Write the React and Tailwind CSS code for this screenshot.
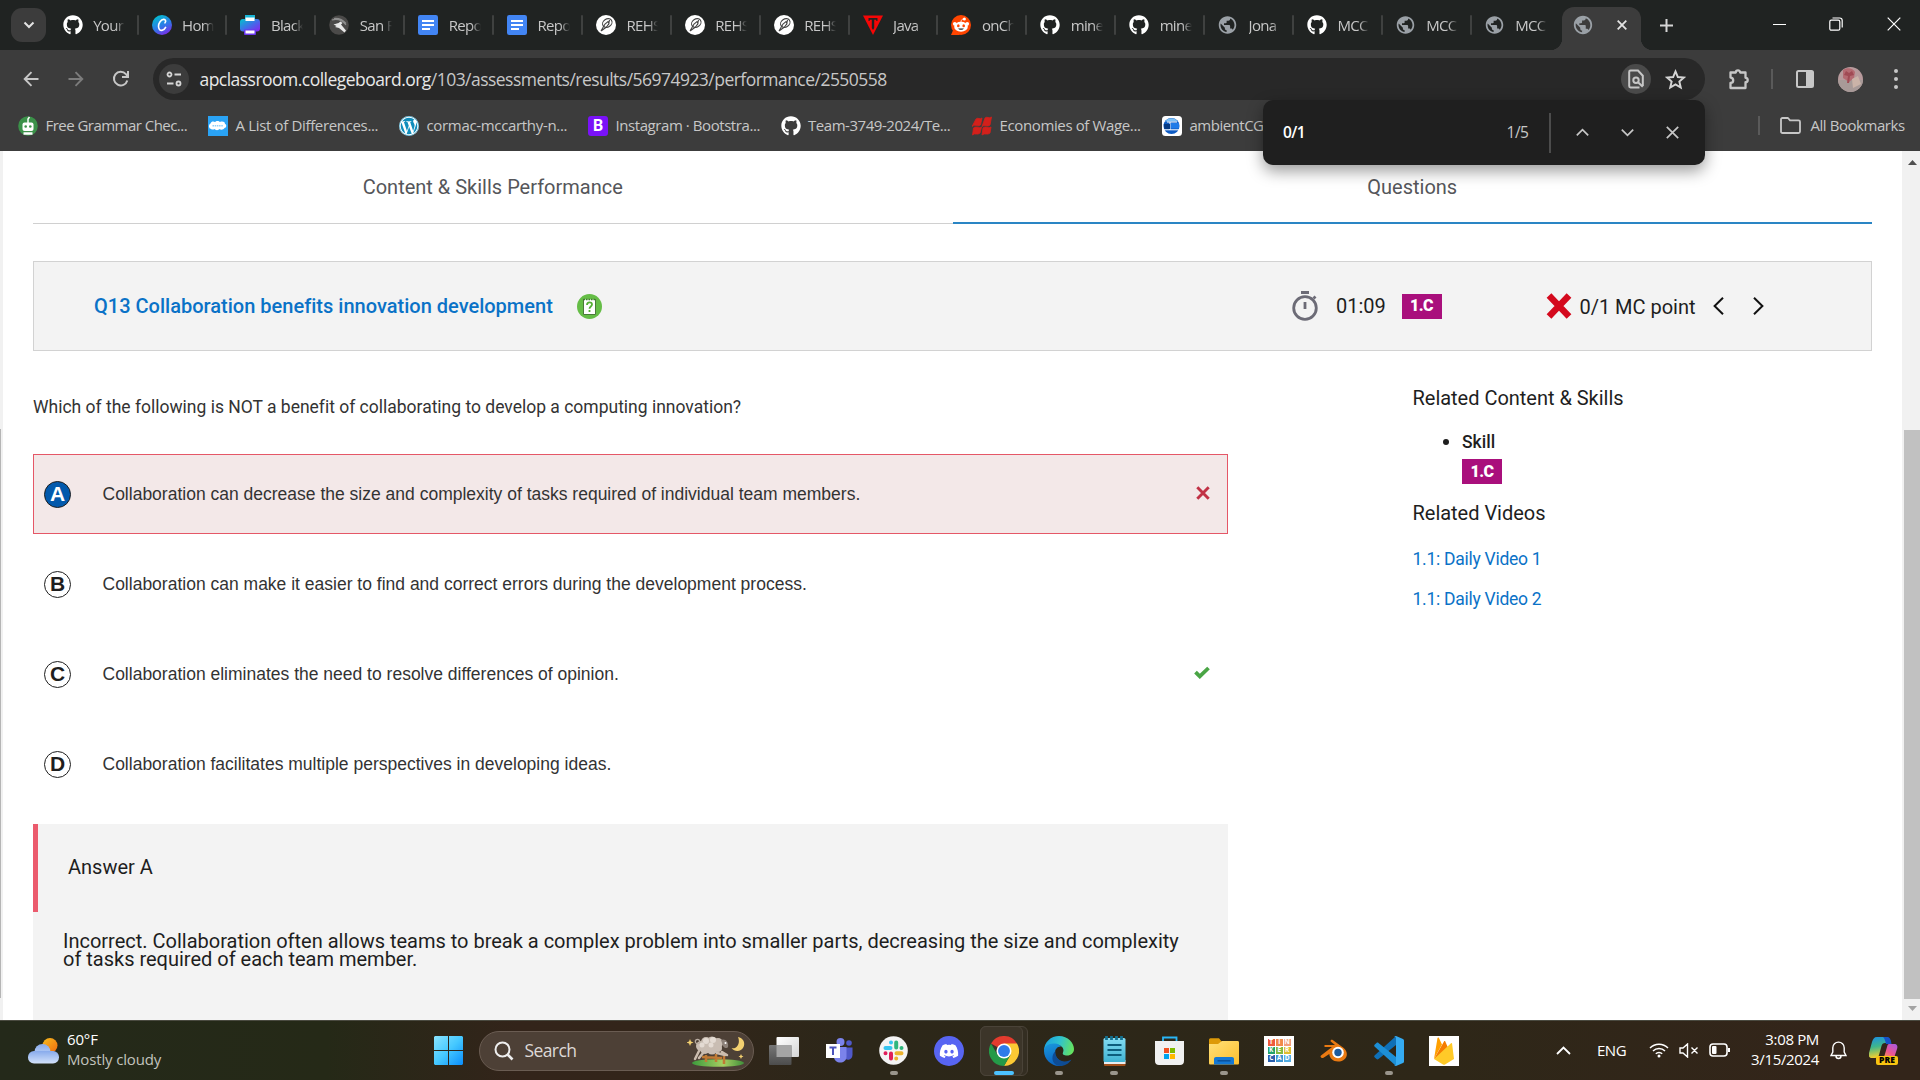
import React from "react";
import { FaGithub, FaDiscord, FaWordpress } from "react-icons/fa";
import { MdPublic } from "react-icons/md";

/* ---------- favicons ---------- */
const Github = () => <FaGithub className="size-5 text-white" />;
const Globe = () => <MdPublic className="-ml-px size-[22px] text-[#9aa0a6]" />;

const Canva = () => (
  <svg className="size-5" viewBox="0 0 20 20">
    <defs>
      <linearGradient id="canva" x1="0.2" y1="0" x2="0.7" y2="1">
        <stop offset="0" stopColor="#00c4cc" />
        <stop offset="0.55" stopColor="#2b7be8" />
        <stop offset="1" stopColor="#7d2ae8" />
      </linearGradient>
    </defs>
    <circle cx="10" cy="10" r="10" fill="url(#canva)" />
    <path d="M13 7.800c1.300-1.500.6-3.600-1.400-3.400-2.700.3-5.100 3.700-5.100 6.900 0 2.700 1.400 4.300 3.400 4.100 1.600-.2 3-1.500 3.700-3" fill="none" stroke="#fff" strokeWidth="1.600" strokeLinecap="round" />
  </svg>
);

const Printer = () => (
  <svg className="size-5" viewBox="0 0 20 20">
    <defs>
      <linearGradient id="prn" x1="0" y1="0" x2="1" y2="1">
        <stop offset="0" stopColor="#00c4cc" />
        <stop offset="0.5" stopColor="#3f6fe8" />
        <stop offset="1" stopColor="#8b1ff0" />
      </linearGradient>
    </defs>
    <rect x="5" y="0" width="10" height="6" fill="#19b5d6" />
    <rect x="0" y="4" width="20" height="12.500" rx="3" fill="url(#prn)" />
    <rect x="5.500" y="2.500" width="9" height="3.500" fill="#fff" />
    <rect x="4" y="14.500" width="12" height="5.500" rx="1" fill="#6a35ee" />
    <rect x="5.500" y="15.500" width="9" height="3" fill="#fff" />
  </svg>
);

const SanIcon = () => (
  <svg className="size-5" viewBox="0 0 20 20">
    <circle cx="10" cy="10" r="9.800" fill="#4b4a49" />
    <path d="M3 5c5-1.500 10 0 14 5M5 3.500c5-.5 9 1.500 12 5" stroke="#8f8f8f" strokeWidth="1.200" fill="none" />
    <path d="M4.500 9.500l5-1.500 2-1.500 2 1.500-1.500 1.500 5 6-1.500 2-5.500-4.500-4-1 1.500-1z" fill="#e8e8e8" />
  </svg>
);

const Docs = () => (
  <svg className="size-5" viewBox="0 0 20 20">
    <rect width="20" height="20" rx="2.200" fill="#4285f4" />
    <path d="M4 6h12M4 10h12M4 14h8" stroke="#fff" strokeWidth="1.800" />
  </svg>
);

const Rehs = () => (
  <svg className="size-5" viewBox="0 0 20 20">
    <circle cx="10" cy="10" r="10" fill="#fff" />
    <g fill="none" stroke="#444" strokeWidth="1.100">
      <ellipse cx="11.300" cy="8" rx="5" ry="4" transform="rotate(-35 11.300 8)" />
      <path d="M5 16l4-7 3-2.500 1 2-2.500 3.500L5 16M13.500 5l-1 5" />
    </g>
  </svg>
);

const RedT = () => (
  <svg className="size-5" viewBox="0 0 20 20">
    <path d="M0 .5h20L10 20z" fill="#f60606" />
    <path d="M5.500 3h9v3h-1l-.5-1.300h-1.800V13l-1.200 2-1.200-2V4.700H7L6.500 6h-1z" fill="#222" />
  </svg>
);

const Reddit = () => (
  <svg className="size-5" viewBox="0 0 20 20">
    <circle cx="10" cy="10" r="10" fill="#ff4500" />
    <path d="M0 20l3-7 6 7z" fill="#ff4500" />
    <circle cx="3.800" cy="8.800" r="1.900" fill="#fff" />
    <circle cx="16.200" cy="8.800" r="1.900" fill="#fff" />
    <circle cx="13.400" cy="3.900" r="1.500" fill="#fff" />
    <path d="M10 7c.1-2 .9-3 3-3" stroke="#fff" strokeWidth=".8" fill="none" />
    <ellipse cx="10" cy="11.700" rx="6.800" ry="5" fill="#fff" />
    <ellipse cx="7.300" cy="10.800" rx="1.300" ry="1.500" fill="#ff4500" />
    <ellipse cx="12.700" cy="10.800" rx="1.300" ry="1.500" fill="#ff4500" />
    <path d="M7.200 13.500h5.600c-.5 1.800-5.100 1.800-5.600 0z" fill="#222" />
  </svg>
);

const tabs = [
  [Github, "Your"],
  [Canva, "Hom"],
  [Printer, "Black"],
  [SanIcon, "San F"],
  [Docs, "Repo"],
  [Docs, "Repo"],
  [Rehs, "REHS"],
  [Rehs, "REHS"],
  [Rehs, "REHS"],
  [RedT, "Java"],
  [Reddit, "onCh"],
  [Github, "mine"],
  [Github, "mine"],
  [Globe, "Jona"],
  [Github, "MCC"],
  [Globe, "MCC"],
  [Globe, "MCC"],
];

function TabStrip() {
  return (
    <div className="flex h-[50px] bg-[#202322]">
      <div className="mt-2 ml-[11px] flex h-[34px] w-[35px] items-center justify-center rounded-[11px] bg-[#3c3c3c]">
        <svg className="size-3" viewBox="0 0 12 12" fill="none" stroke="#e3e3e3" strokeWidth="2">
          <path d="M1.500 3.500L6 8l4.500-4.500" />
        </svg>
      </div>
      <div className="ml-[4.700px] flex w-[1511px]">
        {tabs.map(([Icon, label], i) => (
          <div key={i} className="flex min-w-0 flex-1 items-center pl-3">
            <div className="flex w-5 shrink-0 justify-center"><Icon /></div>
            <div className="ml-[10.500px] w-[32px] overflow-hidden text-[15px] tracking-[-0.700px] whitespace-nowrap text-[#c7c7c7] [mask-image:linear-gradient(to_right,#000_70%,transparent)]">
              {label}
            </div>
            <div className={"mr-px ml-auto h-5 w-0.5 rounded-full " + (i === 16 ? "bg-transparent" : "bg-[#3f4140]")} />
          </div>
        ))}
      </div>
      <div className="relative mt-[7px] flex w-[79px] items-center rounded-t-xl bg-[#3c3c3c] pb-[7px] pl-[11px]">
        <div className="absolute bottom-0 -left-3 size-3 bg-[radial-gradient(circle_at_0_0,transparent_12px,#3c3c3c_12.500px)]" />
        <div className="absolute -right-3 bottom-0 size-3 bg-[radial-gradient(circle_at_100%_0,transparent_12px,#3c3c3c_12.500px)]" />
        <Globe />
        <svg className="ml-[23px] size-2.5" viewBox="0 0 10 10" stroke="#e3e3e3" strokeWidth="1.800">
          <path d="M.7.7l8.600 8.600M9.300.7L.7 9.300" />
        </svg>
      </div>
      <svg className="mt-[18.500px] ml-[19px] size-[13px]" viewBox="0 0 13 13" stroke="#d5d5d5" strokeWidth="2">
        <path d="M6.500 0v13M0 6.500h13" />
      </svg>
      <div className="ml-auto flex items-center pr-[19px] pb-0.5">
        <div className="mr-[43px] h-px w-[13px] bg-white" />
        <svg className="mr-[44px] size-[14px]" viewBox="0 0 14 14" fill="none" stroke="#fff" strokeWidth="1.200">
          <rect x=".8" y="3.200" width="10" height="10" rx="1.500" />
          <path d="M3.500 1h7.200c1.400 0 2.500 1.100 2.500 2.500v7" />
        </svg>
        <svg className="size-[14px]" viewBox="0 0 14 14" stroke="#fff" strokeWidth="1.200">
          <path d="M.7.7l12.600 12.600M13.300.7L.7 13.300" />
        </svg>
      </div>
    </div>
  );
}

function Toolbar() {
  return (
    <div className="flex h-[50px] items-center bg-[#3c3c3c] pt-2">
      <svg className="ml-[22.500px] size-4" viewBox="0 0 16 16" fill="none" stroke="#c7c7c7" strokeWidth="1.900">
        <path d="M15.500 8H2M8.500 1.200L1.700 8l6.800 6.800" />
      </svg>
      <svg className="ml-[29px] size-4" viewBox="0 0 16 16" fill="none" stroke="#7c7c7c" strokeWidth="1.900">
        <path d="M.5 8H14M7.500 1.200L14.300 8l-6.800 6.800" />
      </svg>
      <svg className="ml-[28px] size-[18px]" viewBox="0 0 18 18" fill="none" stroke="#c7c7c7" strokeWidth="2">
        <path d="M15.300 10.500A6.800 6.800 0 1 1 13.900 4.200l1.600 1.800" />
        <path d="M16 1v6h-6" />
      </svg>
      <div className="ml-[23.500px] flex h-[42px] w-[1552px] items-center rounded-full bg-[#282828]">
        <div className="ml-1.5 flex size-[30px] items-center justify-center rounded-full bg-[#3c3c3c]">
          <svg className="size-4" viewBox="0 0 16 16" fill="none" stroke="#d5d5d5" strokeWidth="1.800">
            <circle cx="3.500" cy="3.500" r="2" />
            <path d="M8.500 3.500H15M1 12.500h6.500" />
            <circle cx="12.500" cy="12.500" r="2" />
          </svg>
        </div>
        <div className="ml-[10.500px] text-[17.500px] tracking-[-0.530px] whitespace-nowrap text-[#c7c7c7]">
          <span className="text-[#e8e8e8]">apclassroom.collegeboard.org</span>/103/assessments/results/56974923/performance/2550558
        </div>
        <div className="ml-auto flex size-[30px] items-center justify-center rounded-full bg-[#4a4a4a]">
          <svg className="h-[20px] w-4" viewBox="0 0 16 19" fill="none" stroke="#c7c7c7" strokeWidth="2">
            <path d="M14.800 16.500V6.200L10 1.100H2.500c-.8 0-1.300.5-1.300 1.300v14.200c0 .8.500 1.300 1.300 1.300h9" />
            <circle cx="8" cy="10.700" r="2.700" />
            <path d="M10 12.700l4.800 4.600" />
          </svg>
        </div>
        <svg className="mr-[19px] ml-[14px] size-[21px]" viewBox="0 0 24 24" fill="none" stroke="#d5d5d5" strokeWidth="2.200">
          <path d="M12 2.800l2.700 6.400 6.900.6-5.200 4.500 1.600 6.800-6-3.600-6 3.600 1.600-6.800-5.200-4.500 6.900-.6z" />
        </svg>
      </div>
      <svg className="ml-[23px] size-[22px]" viewBox="0 0 22 22" fill="none" stroke="#c7c7c7" strokeWidth="2.300" strokeLinejoin="round">
        <path d="M2.500 4.500h5.300a2.200 2.200 0 0 1 4.400 0h5.300v5.300a2.200 2.200 0 0 1 0 4.400V20h-15v-5a2.700 2.700 0 0 0 0-5.400z" />
      </svg>
      <div className="ml-[21px] h-5 w-0.5 bg-[#5a5a5a]" />
      <svg className="ml-[23px] size-[18px]" viewBox="0 0 18 18">
        <rect x="1" y="1" width="16" height="16" rx="1.500" fill="none" stroke="#c7c7c7" strokeWidth="2" />
        <path d="M10 1h7v16h-7z" fill="#c7c7c7" />
      </svg>
      <svg className="ml-6 size-[25px] rounded-full" viewBox="0 0 25 25">
        <rect width="25" height="25" fill="#b89a9c" />
        <path d="M0 13h25v12H0z" fill="#a89a98" />
        <path d="M5 3c4-3 10-2 12 2l-1 6-5 4-6-4z" fill="#b56a72" />
        <path d="M8 4l3 2 3-2 2 4-4 1-1 7H9l1-7-4-1z" fill="#a04a54" />
        <path d="M14 12l6-3 3 8-8 4z" fill="#cbb3a8" />
      </svg>
      <div className="ml-[31px] flex flex-col gap-[4.500px]">
        <div className="size-[3.500px] rounded-full bg-[#c7c7c7]" />
        <div className="size-[3.500px] rounded-full bg-[#c7c7c7]" />
        <div className="size-[3.500px] rounded-full bg-[#c7c7c7]" />
      </div>
    </div>
  );
}

const bookmarks = [
  ["Free Grammar Chec...", "w-[190px]", "tracking-[-0.530px]", (
    <svg className="size-5" viewBox="0 0 20 20"><circle cx="10" cy="10" r="9.800" fill="#3b9149" /><path d="M10 7V3l1.500-2" stroke="#fff" strokeWidth="1.500" fill="none" /><rect x="4.500" y="6.500" width="11" height="8.500" rx="2" fill="#fff" /><circle cx="7.700" cy="10.500" r="1.300" fill="#3b9149" /><circle cx="12.300" cy="10.500" r="1.300" fill="#3b9149" /><path d="M5.500 17.500h9" stroke="#fff" strokeWidth="2.500" /></svg>
  )],
  ["A List of Differences...", "w-[191px]", "tracking-[-0.340px]", (
    <svg className="size-5" viewBox="0 0 20 20"><rect width="20" height="20" fill="#2aa3f5" /><path d="M3 13a3 3 0 0 1-.5-5.500C3 5 6 5 7 6c1-1.500 4-1.500 5 0 2-1 5-.5 5 2 2 .5 1.500 4-.5 4-1 2-4 2-5 1-1 1.500-4 1.500-5 0-1 .8-2.500.8-3.500 0z" fill="#fff" /><path d="M4.500 9.800h11" stroke="#8fcff9" strokeWidth="1.500" strokeDasharray="1.500 .7" /></svg>
  )],
  ["cormac-mccarthy-n...", "w-[189px]", "tracking-[-0.330px]", (
    <div className="flex size-5 items-center justify-center rounded-full bg-white"><FaWordpress className="size-5 text-[#0f8dbc]" /></div>
  )],
  ["Instagram · Bootstra...", "w-[192.500px]", "tracking-[-0.430px]", (
    <div className="flex size-5 items-center justify-center rounded-[3px] bg-[#7a12f8] font-[Roboto] text-[16px] font-bold text-white">B</div>
  )],
  ["Team-3749-2024/Te...", "w-[191.500px]", "tracking-[-0.450px]", <Github key="g" />],
  ["Economies of Wage...", "w-[190px]", "tracking-[-0.370px]", (
    <svg className="size-5" viewBox="0 0 20 20"><path d="M4 3c2-2 4 1 6-1L8.500 9c-3 2.500-5-1.500-8.500 1.500zM13 2c2-2 4 1 6.500-1L18 9c-3 2.500-5-1-8 1.500zM1.500 12c3-2.500 5 1 8-1L8 17c-2.500 2.500-5-.5-7.500 2zM11 12c3-2.500 5 1 8-1l-1 6c-2.500 2.500-5-.5-8 2z" fill="#d3201b" stroke="#d3201b" strokeWidth=".8" /></svg>
  )],
  ["ambientCG", "w-[110px]", "tracking-[-0.500px]", (
    <svg className="size-5" viewBox="0 0 20 20"><rect width="20" height="20" rx="3.500" fill="#fff" /><circle cx="9.500" cy="10" r="8" fill="#0d5bc4" /><path d="M3 5.500C6 1 13 1 16 5.500z" fill="#7cc0f5" /><path d="M5 6h10M8 6v8M2 13.800h15" stroke="#fff" strokeWidth="1" /><path d="M1.700 8h6.300v5H2.500z" fill="#063a83" /><path d="M9 7h8v5.500H9z" fill="#1f7be8" /></svg>
  )],
];

function BookmarksBar() {
  return (
    <div className="flex h-[51px] items-center bg-[#3c3c3c] pl-[18px] text-[15px] text-[#c7c7c7]">
      {bookmarks.map(([label, w, tr, icon]) => (
        <div key={label} className={"flex shrink-0 items-center " + w}>
          {icon}
          <span className={"ml-[7.500px] whitespace-nowrap " + tr}>{label}</span>
        </div>
      ))}
      <div className="ml-auto h-[19px] w-0.5 bg-[#5a5a5a]" />
      <svg className="ml-5 h-[17px] w-[21px]" viewBox="0 0 21 17" fill="none" stroke="#c7c7c7" strokeWidth="1.800" strokeLinejoin="round">
        <path d="M1 2.500C1 1.600 1.600 1 2.500 1H8l2 2.300h8.500c.9 0 1.500.6 1.500 1.500v9.700c0 .9-.6 1.500-1.500 1.500h-16C1.600 16 1 15.400 1 14.500z" />
      </svg>
      <span className="mr-[14.500px] ml-[9.500px] w-[95px] tracking-[-0.450px] whitespace-nowrap">All Bookmarks</span>
    </div>
  );
}

function FindBar() {
  return (
    <div className="absolute top-[100px] left-[1263px] z-20 flex h-[65px] w-[442px] items-center rounded-[10px] bg-[#1f1f1f] pl-5 text-[15.500px] shadow-[0_6px_16px_rgba(0,0,0,0.4)]">
      <span className="font-semibold tracking-[-0.600px] text-white">0/1</span>
      <span className="mr-5 ml-auto tracking-[-0.500px] text-[#c7c7c7]">1/5</span>
      <div className="h-10 w-0.5 bg-[#4c4c4c]" />
      <svg className="ml-[25px] size-[13px]" viewBox="0 0 13 13" fill="none" stroke="#c7c7c7" strokeWidth="1.700"><path d="M.8 9.300l5.700-5.700 5.700 5.700" /></svg>
      <svg className="ml-8 size-[13px]" viewBox="0 0 13 13" fill="none" stroke="#c7c7c7" strokeWidth="1.700"><path d="M.8 3.700l5.700 5.700 5.700-5.700" /></svg>
      <svg className="mr-[26.500px] ml-8 size-[13px]" viewBox="0 0 13 13" fill="none" stroke="#c7c7c7" strokeWidth="1.700"><path d="M.8.8l11.400 11.400M12.200.8L.8 12.200" /></svg>
    </div>
  );
}

/* ---------- page ---------- */
const Badge = () => (
  <div className="flex h-[25px] w-10 items-center justify-center bg-[#a90f7c] text-[16px] font-black tracking-[-0.500px] text-white">1.C</div>
);

const choices = [
  ["A", "Collaboration can decrease the size and complexity of tasks required of individual team members."],
  ["B", "Collaboration can make it easier to find and correct errors during the development process."],
  ["C", "Collaboration eliminates the need to resolve differences of opinion."],
  ["D", "Collaboration facilitates multiple perspectives in developing ideas."],
];

function Choice({ letter, text }) {
  const wrong = letter === "A";
  return (
    <div className={"mb-2.5 flex h-20 items-center border pl-2.5 font-['Liberation_Sans',sans-serif] " + (wrong ? "border-[#e55767] bg-[#f3e8e8]" : "border-transparent")}>
      <div className={"flex size-[27px] shrink-0 items-center justify-center rounded-full border-[1.500px] border-[#1e1e1e] text-[21px] font-bold " + (wrong ? "bg-[#0259ac] text-white" : "bg-white text-[#1e1e1e]")}>
        {letter}
      </div>
      <span className="ml-[31.500px] text-[17.500px] whitespace-nowrap text-[#333]">{text}</span>
      {wrong && (
        <svg className="mr-[17.500px] mb-0.5 ml-auto size-[14px]" viewBox="0 0 13 13" stroke="#c13145" strokeWidth="2.700"><path d="M1.200 1.200l10.600 10.600M11.800 1.200L1.200 11.800" /></svg>
      )}
      {letter === "C" && (
        <svg className="mr-[17px] mb-[3px] ml-auto h-[13px] w-4" viewBox="0 0 16 13" fill="none" stroke="#4aa545" strokeWidth="3.800"><path d="M1.500 6.200l4.300 4.200L14.500 2" /></svg>
      )}
    </div>
  );
}

function Page() {
  return (
    <div className="flex h-[869px] bg-white font-[Roboto,sans-serif] text-[#1e1e1e]">
      <div className="w-[3px] bg-[#f1f1f1] pt-[278px]">
        <div className="h-[569px] w-px bg-[#b5b5b5]" />
      </div>
      <div className="ml-[30px] flex w-[1839px] flex-col">
        <div className="flex h-[73px] text-[20px] text-[#55565a]">
          <div className="flex flex-1 justify-center border-b border-[#d0d0d0] pt-[21px]">Content &amp; Skills Performance</div>
          <div className="flex flex-1 justify-center border-b-2 border-[#2a85c4] pt-[21px]">Questions</div>
        </div>
        <div className="mt-[37px] flex h-[90px] shrink-0 items-center border border-[#d2d2d2] bg-[#f3f3f3] text-[20px]">
          <div className="ml-[60px] w-[458px] font-medium tracking-[0.010px] whitespace-nowrap text-[#0a72c7]">Q13 Collaboration benefits innovation development</div>
          <div className="ml-[25px] flex size-[25px] items-center justify-center rounded-full bg-[#65bd46]">
            <svg className="h-[17px] w-[13px]" viewBox="0 0 13 17">
              <rect x=".5" y="1.500" width="12" height="15" fill="#fff" />
              <path d="M.5 1v15.500h12V1" fill="none" stroke="#4a7a3a" strokeWidth="1" />
              <path d="M.5 1.500h12" stroke="#3f7a2e" strokeWidth="1.500" strokeDasharray="1.500 1" />
              <path d="M4 7c0-3.500 5-3.500 5-.5 0 2-2.500 2-2.500 4.200M6.500 12v2" fill="none" stroke="#55b034" strokeWidth="1.800" />
            </svg>
          </div>
          <svg className="ml-[690px] h-[30px] w-[26px]" viewBox="0 0 26 30" fill="none" stroke="#6c6b76" strokeWidth="2.800">
            <circle cx="13" cy="17" r="11.300" />
            <path d="M9 1.500h8M13 11v7M21.500 7.500l2-2" />
          </svg>
          <div className="ml-[18px] w-[51px]">01:09</div>
          <div className="ml-[14.500px]"><Badge /></div>
          <svg className="ml-[104px] size-[26px]" viewBox="0 0 26 26" stroke="#d4091d" strokeWidth="6.500"><path d="M3 2.500l20 21M23 2.500l-20 21" /></svg>
          <div className="ml-2 w-[117px] pt-0.5 tracking-[-0.020px] whitespace-nowrap">0/1 MC point</div>
          <svg className="ml-[16px] h-[18px] w-[11px]" viewBox="0 0 11 18" fill="none" stroke="#111" strokeWidth="2"><path d="M10 .8L1.600 9l8.400 8.200" /></svg>
          <svg className="ml-[29px] h-[18px] w-[11px]" viewBox="0 0 11 18" fill="none" stroke="#111" strokeWidth="2"><path d="M1 .8L9.400 9 1 17.200" /></svg>
        </div>
        <div className="flex flex-1">
          <div className="flex w-[1195px] flex-col">
            <div className="h-[103px] pt-[43px] text-[17.500px] tracking-[-0.005px] whitespace-nowrap text-[#333]">
              Which of the following is NOT a benefit of collaborating to develop a computing innovation?
            </div>
            {choices.map(([l, t]) => <Choice key={l} letter={l} text={t} />)}
            <div className="mt-2.5 flex-1 bg-[#f3f3f3]">
              <div className="flex h-[88px] items-center border-l-[5px] border-[#eb5b6d] pb-0.5 pl-[30px] text-[20px]">Answer A</div>
              <div className="mt-5 ml-[30px] text-[20px] leading-[18px] tracking-[-0.006px] whitespace-nowrap">
                Incorrect. Collaboration often allows teams to break a complex problem into smaller parts, decreasing the size and complexity<br />of tasks required of each team member.
              </div>
            </div>
          </div>
          <div className="ml-[184.500px] pt-[32px] text-[20px]">
            <div className="h-[47px] leading-[30px] tracking-[-0.020px]">Related Content &amp; Skills</div>
            <div className="flex items-start">
              <div className="mt-[9px] ml-[30px] size-1.5 rounded-full bg-[#1e1e1e]" />
              <div className="ml-[13.500px]">
                <div className="h-[29px] pt-px text-[17.500px] leading-[23px] font-medium">Skill</div>
                <Badge />
              </div>
            </div>
            <div className="mt-[14px] h-[46px] leading-[30px] tracking-[-0.020px]">Related Videos</div>
            <div className="h-10 text-[17.500px] leading-[30px] tracking-[-0.270px] text-[#0a72c7]">1.1: Daily Video 1</div>
            <div className="text-[17.500px] leading-[30px] tracking-[-0.270px] text-[#0a72c7]">1.1: Daily Video 2</div>
          </div>
        </div>
      </div>
      <div className="ml-auto flex w-[18px] flex-col items-end bg-[#f1f1f1]">
        <svg className="mt-[9px] mr-[3px] h-[5px] w-[9px]" viewBox="0 0 9 5"><path d="M4.500 0L9 5H0z" fill="#505050" /></svg>
        <div className="mt-[265px] h-[569px] w-4 bg-[#c1c1c1]" />
        <svg className="mt-[7px] mr-[3px] h-[5px] w-[9px]" viewBox="0 0 9 5"><path d="M0 0h9L4.500 5z" fill="#a3a3a3" /></svg>
      </div>
    </div>
  );
}

/* ---------- taskbar ---------- */
const Weather = () => (
  <svg className="h-[26px] w-[31px]" viewBox="0 0 31 26">
    <defs>
      <linearGradient id="sun" x1="0" y1="0" x2="1" y2="1"><stop offset="0" stopColor="#f9bd1e" /><stop offset="1" stopColor="#ec6a10" /></linearGradient>
      <linearGradient id="cl" x1="0" y1="0" x2="0" y2="1"><stop offset="0" stopColor="#88abec" /><stop offset="1" stopColor="#d3e2fa" /></linearGradient>
    </defs>
    <circle cx="22" cy="7.500" r="7.500" fill="url(#sun)" />
    <circle cx="14.500" cy="14" r="8" fill="url(#cl)" />
    <rect x="0" y="13" width="31" height="12.500" rx="6" fill="url(#cl)" />
  </svg>
);

const WindowsLogo = () => (
  <svg className="size-[29px]" viewBox="0 0 29 29">
    <defs><linearGradient id="win" gradientUnits="userSpaceOnUse" x1="0" y1="0" x2="29" y2="29"><stop offset="0" stopColor="#8be4ff" /><stop offset="0.5" stopColor="#45c8ff" /><stop offset="1" stopColor="#0a8dfb" /></linearGradient></defs>
    <path d="M1 0h13v14H0V1zM15 0h13l1 1v13H15zM0 15h14v14H1l-1-1zM15 15h14v13l-1 1H15z" fill="url(#win)" />
  </svg>
);

const Sheep = () => (
  <svg className="h-[32px] w-[58px]" viewBox="0 0 58 32">
    <defs><linearGradient id="hill" x1="0" x2="1"><stop offset="0" stopColor="#3c9a3c" /><stop offset=".6" stopColor="#a8cf62" /><stop offset="1" stopColor="#3f8f3a" /></linearGradient></defs>
    <ellipse cx="31" cy="28" rx="26" ry="3.800" fill="url(#hill)" />
    <path d="M15 22l20 1M19 20v7M29 19v8M37 21v8" stroke="#c07a34" strokeWidth="2.500" />
    <path d="M12 16l-4 8M16 18l-4 5M35 17l5 3M30 18l8 2" stroke="#cbbcae" strokeWidth="2.500" strokeLinecap="round" />
    <g fill="#c9bdb3"><circle cx="14" cy="11" r="5" /><circle cx="19" cy="7" r="5" /><circle cx="25" cy="7" r="5.500" /><circle cx="31" cy="8" r="5" /><circle cx="18" cy="14" r="5" /><circle cx="25" cy="14" r="5.500" /><circle cx="31" cy="13" r="4" /></g>
    <g fill="#e4dbd3"><circle cx="19" cy="6" r="3" /><circle cx="26" cy="5" r="3" /><circle cx="15" cy="10" r="2.500" /><circle cx="24" cy="10" r="2.500" /></g>
    <path d="M34 5c4-2 8 2 7 7-1 2-4 1-5-1z" fill="#8d8179" />
    <circle cx="38.500" cy="8" r="1" fill="#fff" />
    <circle cx="10.500" cy="6.500" r="2.200" fill="none" stroke="#b9aca1" strokeWidth="1.200" />
    <path d="M51 2a7 7 0 1 1-6.500 11c6 1.500 9-6 6.500-11z" fill="#f3d070" />
    <path d="M3 4l1 2.500 2.500 1-2.500 1-1 2.500-1-2.500L-.5 7.500l2.500-1zM54 19l.8 1.700 1.700.8-1.700.8-.8 1.700-.8-1.700-1.700-.8 1.700-.8z" fill="#f3d070" />
  </svg>
);

const TaskView = () => (
  <svg className="size-[30px]" viewBox="0 0 30 30">
    <defs><linearGradient id="tv1" x2="1" y2="1"><stop stopColor="#fff" /><stop offset="1" stopColor="#d5d5d5" /></linearGradient><linearGradient id="tv2" x2="0" y2="1"><stop stopColor="#777" /><stop offset="1" stopColor="#4c4c4c" /></linearGradient></defs>
    <rect x="7.500" y="1" width="22.500" height="20" rx="1" fill="url(#tv1)" />
    <rect x="0" y="9" width="22.500" height="20" rx="1" fill="url(#tv2)" />
    <path d="M7.500 9h15v12h-15z" fill="#a5a5a5" />
  </svg>
);

const Teams = () => (
  <svg className="size-[28px]" viewBox="0 0 28 28">
    <circle cx="15.500" cy="5" r="4" fill="#7b83eb" />
    <circle cx="24" cy="6" r="2.800" fill="#5059c9" />
    <path d="M17 10.500h10.500v7c0 6-6 6-8 4z" fill="#5059c9" />
    <path d="M9 10h12.500v9.500c0 8-12.500 8-12.500 0z" fill="#7b83eb" />
    <rect x="1" y="7" width="14" height="14" fill="#fff" />
    <path d="M4.500 10.500h7M8 10.500v7.500" stroke="#4b53bc" strokeWidth="2" />
  </svg>
);

const Slack = () => (
  <svg className="size-[29px]" viewBox="0 0 29 29" fill="none" strokeWidth="4" strokeLinecap="round">
    <circle cx="14.500" cy="14.500" r="14.300" fill="#f4f4f4" />
    <path d="M6.500 12h5M12 6.500h.01" stroke="#36c5f0" />
    <path d="M17.200 6.500v5M22.500 12h.01" stroke="#2eb67d" />
    <path d="M17.500 17.200h5M17.200 22.500h.01" stroke="#ecb22e" />
    <path d="M12 17.500v5M6.500 17.200h.01" stroke="#e01e5a" />
  </svg>
);

const Discord = () => (
  <div className="flex size-[30px] items-center justify-center rounded-full bg-[#5865f2]"><FaDiscord className="size-5 text-white" /></div>
);

const Chrome = () => (
  <svg className="size-[30px]" viewBox="0 0 48 48">
    <path d="M24 24L3.200 12A24 24 0 0 1 44.800 12z" fill="#e33b2e" />
    <path d="M24 12h20.800A24 24 0 0 1 24 48l10.400-18z" fill="#fcc934" />
    <path d="M3.200 12A24 24 0 0 0 24 48l10.400-18H13.600z" fill="#249a48" />
    <circle cx="24" cy="24" r="12" fill="#fff" />
    <circle cx="24" cy="24" r="9.500" fill="#2f7bea" />
  </svg>
);

const Edge = () => (
  <svg className="size-[30px]" viewBox="0 0 30 30">
    <defs>
      <linearGradient id="e1" x1="0" y1=".3" x2="1" y2=".5"><stop stopColor="#1ba1e0" /><stop offset=".5" stopColor="#2fc2cf" /><stop offset="1" stopColor="#66e35f" /></linearGradient>
      <linearGradient id="e2" x1="0" y1="0" x2=".3" y2="1"><stop stopColor="#1a98dd" /><stop offset="1" stopColor="#0b63c0" /></linearGradient>
    </defs>
    <path d="M0 15C0 6 7 0 15 0c9 0 15 7 15 13 0 4-3 6.500-7 6.500-3 0-5-1-4-3 2-5-3-8-7-8-6 0-11 3-12 6.500z" fill="url(#e1)" />
    <path d="M0 15c0-5 5-8 11-7.500 3 0 5 1.500 6 3-4 0-6 3-6 6 0 6 6 10 12 10-2 2-5 3.500-8 3.500C7 30 0 23 0 15z" fill="url(#e2)" />
    <path d="M11.500 15c-1 6 4 10.500 9 10.500 3 0 6-1.500 7-2-3 5-8 7-13 6.300C7 28 7 19 11.500 15z" fill="#0e4c94" />
  </svg>
);

const Notepad = () => (
  <svg className="h-[30px] w-[23px]" viewBox="0 0 23 30">
    <defs><linearGradient id="np" x2="0" y2="1"><stop stopColor="#83dcf3" /><stop offset="1" stopColor="#3fb3d3" /></linearGradient></defs>
    <rect x="1" y="26" width="21.500" height="4" rx="1" fill="#a3501c" />
    <rect x="1" y="24" width="21.500" height="4" fill="#e9edf0" />
    <rect x=".5" y="2" width="22" height="24" rx="1.500" fill="url(#np)" />
    <path d="M4.500 9h14M4.500 14h14M4.500 19h14" stroke="#0c5d7d" strokeWidth="1.800" />
    <path d="M3.500 0v4M8.500 0v4M13.500 0v4M18.500 0v4" stroke="#14718f" strokeWidth="2.800" />
  </svg>
);

const Store = () => (
  <svg className="size-[29px]" viewBox="0 0 29 29">
    <path d="M8 6V1.500h13.500V6" fill="none" stroke="#29b6f6" strokeWidth="1.800" />
    <path d="M0 5h29v20c0 2.500-1.500 4-4 4H4c-2.500 0-4-1.500-4-4z" fill="#f1f1f1" />
    <path d="M9 12h5v5H9z" fill="#f25022" /><path d="M15 12h5v5h-5z" fill="#7fba00" />
    <path d="M9 18h5v5H9z" fill="#00a4ef" /><path d="M15 18h5v5h-5z" fill="#ffb900" />
  </svg>
);

const Explorer = () => (
  <svg className="size-[30px]" viewBox="0 0 30 30">
    <defs><linearGradient id="ex" x2="1" y2="1"><stop stopColor="#ffe079" /><stop offset="1" stopColor="#fdbf2d" /></linearGradient></defs>
    <path d="M0 4c0-1 .6-1.700 1.500-1.700H10L13 6l-2 4H0z" fill="#dd9a08" />
    <path d="M0 8h9l4-3h15.500c1 0 1.500.6 1.500 1.500V27c0 1-.5 1.500-1.500 1.500h-27C.5 28.500 0 28 0 27z" fill="url(#ex)" />
    <path d="M5 28.500V23c0-1.300.8-2 2-2h16c1.200 0 2 .7 2 2v5.500z" fill="#1478d4" />
    <path d="M8.500 24.800h13" stroke="#0a529c" strokeWidth="1.500" />
  </svg>
);

const tink = [
  ["T", "bg-[#ef5a3c]"], ["I", "bg-[#f28a4b]"], ["N", "bg-[#f39f7c]"],
  ["K", "bg-[#23a36a]"], ["E", "bg-[#84bb3f]"], ["R", "bg-[#e0bd2f]"],
  ["C", "bg-[#285fae]"], ["A", "bg-[#3f97d3]"], ["D", "bg-[#55aee3]"],
];
const Tinkercad = () => (
  <div className="flex size-[30px] items-center justify-center bg-white">
    <div className="grid grid-cols-3 gap-px">
      {tink.map(([l, c]) => (
        <div key={l} className={"flex size-[7px] items-center justify-center text-[6.500px] leading-none font-bold text-white " + c}>{l}</div>
      ))}
    </div>
  </div>
);

const Blender = () => (
  <svg className="h-[23px] w-[28px]" viewBox="0 0 28 23">
    <path d="M1 16.500L12 8H5.500c-1.600 0-1.600-2 0-2H15L11 2.800C9.800 1.700 11.300 0 12.700 1l11 8c6 5 3 13.500-5.700 13.500-5 0-8.500-3.500-8.700-7.500L3.500 18.800C2 19.800-.5 18 1 16.500z" fill="#ea7a12" />
    <circle cx="18" cy="13.500" r="5.800" fill="#fff" /><circle cx="18" cy="13.500" r="3.700" fill="#1f5b9d" />
  </svg>
);

const VSCode = () => (
  <svg className="size-[30px]" viewBox="0 0 30 30">
    <path d="M22 0L.8 19.300c-.8.800-.8 1.500 0 2.300l1.700 1.500c.6.500 1.300.5 2 0L22 9z" fill="#0f70b7" />
    <path d="M22 30L.8 10.700c-.8-.8-.8-1.500 0-2.300l1.700-1.500c.6-.5 1.300-.5 2 0L22 21z" fill="#1d8fd6" />
    <path d="M22 0l7 3c.7.400 1 .8 1 1.500v21c0 .7-.3 1.200-1 1.500l-7 3c-.9.200-1.500-.1-2-.5 1 .4 2-.4 2-1.500V2c0-1.100-1-1.900-2-1.500.5-.4 1.100-.7 2-.5z" fill="#35abf2" />
  </svg>
);

const Firebase = () => (
  <div className="flex size-[30px] items-center justify-center bg-white">
    <svg className="h-[28px] w-[20px]" viewBox="0 0 20 28">
      <path d="M0 22L3.500 1c.1-.6 1-.8 1.300-.2L8 7.500z" fill="#ffa000" />
      <path d="M0 22L10 4.500c.3-.6 1-.6 1.300 0L15 13z" fill="#f57c00" />
      <path d="M0 22L17 6.300c.4-.4 1-.2 1.100.4L20 22l-9 5.500c-.7.300-1.300.3-2 0z" fill="#ffca28" />
    </svg>
  </div>
);

const Copilot = () => (
  <div className="relative size-[29px]">
    <svg className="size-[29px]" viewBox="0 0 29 29">
      <defs>
        <linearGradient id="c1" x2=".2" y2="1"><stop stopColor="#1a8fe8" /><stop offset=".5" stopColor="#3fb78b" /><stop offset="1" stopColor="#f4cf2f" /></linearGradient>
        <linearGradient id="c2" x1="1" x2=".2" y2="1"><stop stopColor="#a25ae8" /><stop offset=".6" stopColor="#ee5590" /><stop offset="1" stopColor="#f79a4b" /></linearGradient>
      </defs>
      <path d="M8 0h9c3 0 4 2 5 6h-6c-2 0-3 1-3.500 3L10 18c-.6 2-2 3-4 3H3c-3 0-3.500-2-3-5L3 5c1-3 2-5 5-5z" fill="url(#c1)" />
      <path d="M14 0h4c3 0 4 3 4.500 7H17c-1-4-1.500-6-3-7z" fill="#1652c9" />
      <path d="M20 7h5c3 0 4 2 3 5l-3 9H12c2 0 3-1 3.700-3L18 10c.4-2 1-3 2-3z" fill="url(#c2)" />
    </svg>
    <div className="absolute top-[19px] left-[7px] flex h-[9px] w-[22px] items-center justify-center rounded-[2px] bg-[#f8c410] text-[8.500px] leading-none font-extrabold text-black">PRE</div>
  </div>
);

const apps = [
  [TaskView, ""], [Teams, ""], [Slack, "run"], [Discord, ""], [Chrome, "active"], [Edge, "run"],
  [Notepad, "run"], [Store, ""], [Explorer, "run"], [Tinkercad, ""], [Blender, ""], [VSCode, "run"], [Firebase, ""],
];

function Taskbar() {
  return (
    <div className="flex h-[60px] items-center border-t border-[#4a4a40] bg-[linear-gradient(to_right,#24291a_0,#252917_17%,#33241a_27%,#33251a_33%,#2c2719_45%,#2e2718_75%,#33251a_95%)] text-[15px] text-white">
      <div className="ml-[28px]"><Weather /></div>
      <div className="ml-2 w-[367px] pb-1 leading-5 tracking-[-0.150px]">
        <div>60°F</div>
        <div className="text-[#c2c3bd]">Mostly cloudy</div>
      </div>
      <WindowsLogo />
      <div className="ml-4 flex h-10 w-[275px] items-center rounded-full border border-[#6a5c52] bg-[#4d4036] pl-3.5">
        <svg className="size-5" viewBox="0 0 20 20" fill="none" stroke="#eee" strokeWidth="2"><circle cx="8.500" cy="8.500" r="7" /><path d="M13.500 13.500l5 5" strokeWidth="2.600" /></svg>
        <span className="ml-[10.500px] text-[17.500px] tracking-[-0.600px] text-[#ddd9d6]">Search</span>
        <div className="mr-2 ml-auto"><Sheep /></div>
      </div>
      <div className="ml-[2px] flex">
        {apps.map(([Icon, state], i) => (
          <div key={i} className="relative flex h-[50px] w-[55.080px] items-center justify-center">
            {state === "active" && <div className="absolute top-0 left-1 h-[50px] w-[48px] rounded-md border border-[#4a4338] bg-[#342e22]" />}
            {state === "active" && <div className="absolute top-0 left-1 h-[50px] w-[43px] rounded-md border border-[#4a4338] bg-[#3c3529]" />}
            <div className="relative"><Icon /></div>
            {state === "run" && <div className="absolute bottom-px h-1 w-2 rounded-full bg-[#9a958c]" />}
            {state === "active" && <div className="absolute bottom-px h-1 w-5 rounded-full bg-[#4cc2ff]" />}
          </div>
        ))}
      </div>
      <div className="ml-auto flex items-center pr-[22px] pb-px">
        <svg className="h-[9px] w-[15px]" viewBox="0 0 15 9" fill="none" stroke="#fff" strokeWidth="1.800"><path d="M1 8l6.500-6.500L14 8" /></svg>
        <span className="ml-[26px] w-[30px] tracking-[-0.500px]">ENG</span>
        <svg className="ml-[22px] h-[16px] w-[20px]" viewBox="0 0 20 16" fill="none" stroke="#fff" strokeWidth="1.500">
          <path d="M1 6a12.500 12.500 0 0 1 18 0M4 9a8.400 8.400 0 0 1 12 0M6.800 11.800a4.500 4.500 0 0 1 6.400 0" /><circle cx="10" cy="14" r="1.500" fill="#fff" stroke="none" />
        </svg>
        <svg className="ml-2.5 h-[15px] w-[20px]" viewBox="0 0 20 15" fill="none" stroke="#fff" strokeWidth="1.400">
          <path d="M1 5h3l4.500-4v13L4 10H1zM12.500 4.500l6 6M18.500 4.500l-6 6" />
        </svg>
        <svg className="ml-2.5 h-[14px] w-[21px]" viewBox="0 0 21 14" fill="none" stroke="#fff" strokeWidth="1.600">
          <rect x="1" y="1" width="17" height="12" rx="3" /><path d="M20 5v4" strokeWidth="2" /><rect x="3" y="3" width="4.500" height="8" rx="1" fill="#fff" stroke="none" />
        </svg>
        <div className="ml-[17px] w-[72px] pb-[3px] text-right leading-5 tracking-[-0.350px] whitespace-nowrap">
          <div>3:08 PM</div>
          <div>3/15/2024</div>
        </div>
        <svg className="ml-[11px] h-[19px] w-[17px]" viewBox="0 0 17 19" fill="none" stroke="#fff" strokeWidth="1.400">
          <path d="M1 14.500l1.800-3.500V6.800a5.700 5.700 0 0 1 11.400 0V11l1.800 3.500zM6 15a2.500 2.500 0 0 0 5 0" />
        </svg>
        <div className="ml-[22px] pt-0.5"><Copilot /></div>
      </div>
    </div>
  );
}

export default function App() {
  return (
    <div className="relative h-[1080px] w-[1920px] overflow-hidden bg-[#3c3c3c] font-['Open_Sans',sans-serif]">
      <TabStrip />
      <Toolbar />
      <BookmarksBar />
      <Page />
      <Taskbar />
      <FindBar />
    </div>
  );
}
